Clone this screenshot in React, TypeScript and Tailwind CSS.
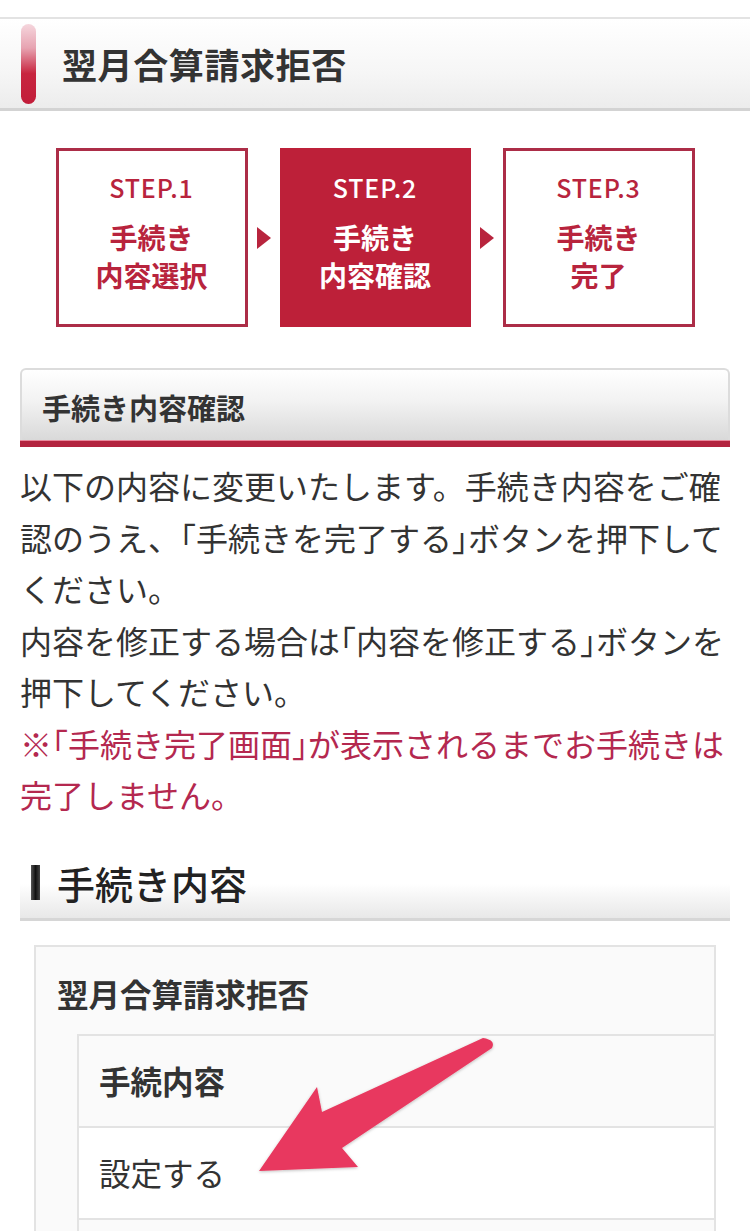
import React from "react";

const lines: { text: string; note?: boolean }[] = [
  { text: "以下の内容に変更いたします。手続き内容をご確" },
  { text: "認のうえ、「手続きを完了する」ボタンを押下して" },
  { text: "ください。" },
  { text: "内容を修正する場合は「内容を修正する」ボタンを" },
  { text: "押下してください。" },
  { text: "※「手続き完了画面」が表示されるまでお手続きは", note: true },
  { text: "完了しません。", note: true },
];

// brackets are drawn half width, like the phone's font does
const withBrackets = (text: string) =>
  text.split(/([「」])/).map((part, i) =>
    part === "「" || part === "」" ? (
      <span key={i} className="[font-feature-settings:'halt']">
        {part}
      </span>
    ) : (
      <React.Fragment key={i}>{part}</React.Fragment>
    )
  );

const steps = [
  { label: "STEP.1", lines: ["手続き", "内容選択"], active: false },
  { label: "STEP.2", lines: ["手続き", "内容確認"], active: true },
  { label: "STEP.3", lines: ["手続き", "完了"], active: false },
];

const StepArrow = () => (
  <div className="w-[32px] flex justify-center">
    <svg width="14" height="22" viewBox="0 0 14 22">
      <polygon points="0,0 14,11 0,22" fill="#b8243d" />
    </svg>
  </div>
);

export default function App() {
  return (
    <div className="relative w-[750px] min-h-[1231px] bg-white overflow-hidden font-['Noto_Sans_CJK_JP',sans-serif] text-[#333]">
      {/* page title */}
      <div className="h-[17px]" />
      <div className="h-[94px] border-t-2 border-[#e3e3e3] border-b-[3px] border-b-[#d3d3d3] bg-[linear-gradient(to_bottom,#ffffff,#f6f6f6_60%,#ececec)] flex items-center pl-[21px]">
        <div className="w-[15px] h-[80px] rounded-full bg-[linear-gradient(to_bottom,#f5d6dd,#e7a3b1_30%,#c8253f_62%,#c21d3a)]" />
        <h1 className="ml-[26px] text-[35px] font-bold leading-none tracking-[0.6px] text-[#333]">
          翌月合算請求拒否
        </h1>
      </div>

      {/* steps */}
      <div className="mt-[37px] flex justify-center items-center">
        {steps.map((step, i) => (
          <React.Fragment key={step.label}>
            {i > 0 && <StepArrow />}
            <div
              className={
                step.active
                  ? "w-[191px] h-[179px] bg-[#bd2039] text-white flex flex-col items-center justify-center pb-[6px]"
                  : "w-[192px] h-[179px] border-[3px] border-[#ac2d47] bg-white text-[#b8243d] flex flex-col items-center justify-center pb-[6px]"
              }
            >
              <div className="text-[25px] font-medium leading-none mb-[18px] tracking-[0.8px]">
                {step.label}
              </div>
              {step.lines.map((l) => (
                <div key={l} className="text-[28px] font-bold leading-[38px]">
                  {l}
                </div>
              ))}
            </div>
          </React.Fragment>
        ))}
      </div>

      {/* confirm header */}
      <div className="mt-[41px] mx-[20px]">
        <div className="h-[72px] rounded-t-[6px] border-2 border-b-0 border-[#dcdcdc] bg-[linear-gradient(to_bottom,#ffffff,#f2f2f2_45%,#d9d9d9)] flex items-center pl-[20px] pt-[6px]">
          <span className="text-[29px] font-bold text-[#333]">手続き内容確認</span>
        </div>
        <div className="h-[1px] bg-[#e98a9c]" />
        <div className="h-[6px] bg-[#b3243f]" />
      </div>

      {/* explanation */}
      <div className="mt-[13px] px-[20px] text-[32px] leading-[51.5px]">
        {lines.map((line, i) => (
          <div
            key={i}
            className={
              line.note
                ? "whitespace-nowrap text-[#b4284f]"
                : "whitespace-nowrap text-[#333]"
            }
          >
            {withBrackets(line.text)}
          </div>
        ))}
      </div>

      {/* 手続き内容 */}
      <div className="mt-[35px] mx-[20px] h-[65px] flex items-center pb-[8px] border-b-[3px] border-[#d6d6d6] bg-[linear-gradient(to_bottom,#ffffff_45%,#f4f4f4_70%,#e8e8e8)]">
        <div className="ml-[11px] w-[9px] h-[35px] bg-[linear-gradient(to_right,#555,#111_50%,#444)]" />
        <h2 className="ml-[17px] text-[38px] font-medium leading-none text-[#222]">
          手続き内容
        </h2>
      </div>

      <div className="mt-[24px] ml-[34px] w-[682px] border-2 border-b-0 border-[#e3e3e3] bg-[#fafafa] pb-[40px]">
        <div className="pl-[21px] pt-[26px] text-[31.5px] font-semibold leading-[40px] text-[#333]">
          翌月合算請求拒否
        </div>
        <div className="mt-[21px] ml-[41px] border-l-2 border-t-2 border-[#e3e3e3]">
          <div className="h-[92px] bg-[#fafafa] flex items-center pl-[20px] border-b-2 border-[#e3e3e3]">
            <span className="text-[31.5px] font-bold text-[#333]">手続内容</span>
          </div>
          <div className="h-[92px] bg-white flex items-center pl-[20px] border-b-2 border-[#e3e3e3]">
            <span className="text-[31.5px] text-[#333]">設定する</span>
          </div>
          <div className="h-[92px] bg-[#fafafa]" />
        </div>
      </div>

      {/* pink arrow annotation */}
      <svg
        className="absolute left-[250px] top-[1030px] pointer-events-none"
        width="250"
        height="150"
        viewBox="250 1030 250 150"
      >
        <defs>
          <filter id="sh" x="-10%" y="-10%" width="120%" height="120%">
            <feDropShadow dx="0" dy="1" stdDeviation="1.5" floodColor="#000" floodOpacity="0.25" />
          </filter>
        </defs>
        <path
          d="M483 1038 L322 1112 L317 1087 L259 1171 L358 1167 L342 1148 L492 1048 Q496 1040 483 1038 Z"
          fill="#e8395e"
          filter="url(#sh)"
        />
      </svg>
    </div>
  );
}
